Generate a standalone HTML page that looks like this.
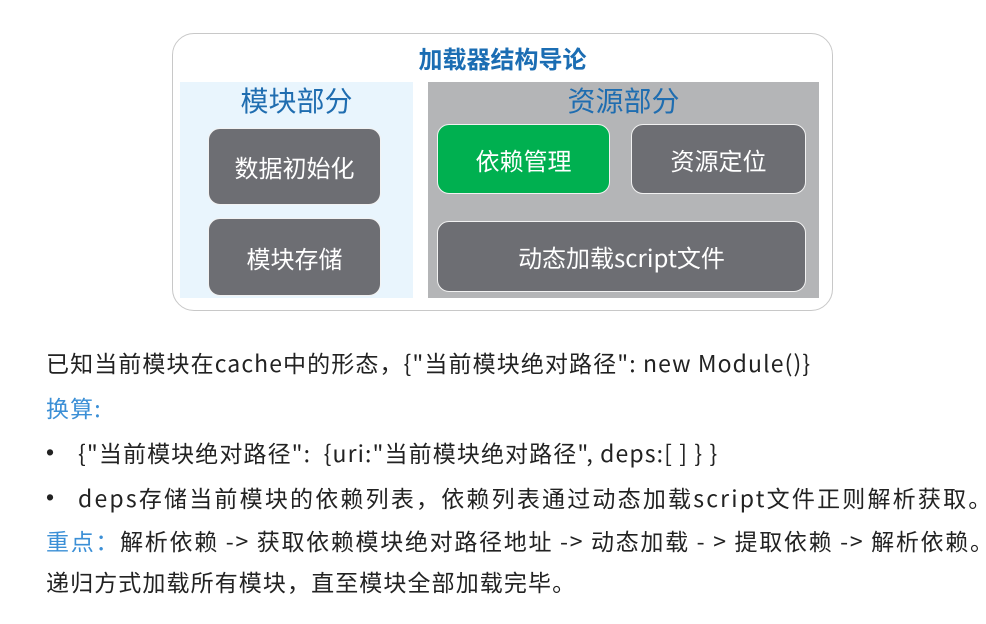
<!DOCTYPE html>
<html><head><meta charset="utf-8"><style>
body{margin:0;width:986px;height:624px;background:#fff;font-family:"Noto Sans CJK SC","Liberation Sans",sans-serif;position:relative;overflow:hidden}
.a{position:absolute}
.outer{left:172px;top:33px;width:659px;height:276px;border:1.5px solid #c8c8c8;border-radius:22px}
.title{left:172px;width:661px;top:42px;line-height:32px;text-align:center;font-size:24px;font-weight:bold;color:#1b6db3}
.lp{left:180px;top:82px;width:233px;height:216px;background:#e9f5fd}
.rp{left:428px;top:82px;width:391px;height:216px;background:#b4b5b7}
.h{font-size:28px;line-height:36px;color:#1f6db0;text-align:center}
.b{background:#6d6e73;border:1.5px solid #f2f2f2;border-radius:12px;color:#fff;font-size:24px;display:flex;align-items:center;justify-content:center;box-sizing:border-box}
.t{left:46px;font-size:23px;line-height:30px;color:#222;white-space:nowrap;letter-spacing:1.1px}
.blue{color:#3b8fd6}
.bul{position:absolute;left:0;font-family:"Liberation Sans",sans-serif}
</style></head><body>
<div class="a outer"></div>
<div class="a title">加载器结构导论</div>
<div class="a lp"></div>
<div class="a rp"></div>
<div class="a h" style="left:180px;width:233px;top:82px">模块部分</div>
<div class="a h" style="left:428px;width:391px;top:82px">资源部分</div>
<div class="a b" style="left:208px;top:128px;width:173px;height:77px">数据初始化</div>
<div class="a b" style="left:208px;top:218px;width:173px;height:78px">模块存储</div>
<div class="a b" style="left:437px;top:124px;width:173px;height:70px;background:#00b050">依赖管理</div>
<div class="a b" style="left:631px;top:124px;width:175px;height:70px">资源定位</div>
<div class="a b" style="left:437px;top:221px;width:369px;height:71px">动态加载script文件</div>
<div class="a t" style="top:347px">已知当前模块在cache中的形态，{"当前模块绝对路径": new Module()}</div>
<div class="a t blue" style="top:392px">换算:</div>
<div class="a t" style="top:437px"><span class="bul">•</span><span style="padding-left:32px">{"当前模块绝对路径":&nbsp; {uri:"当前模块绝对路径", deps:[ ] } }</span></div>
<div class="a t" style="top:482px;letter-spacing:2.2px"><span class="bul">•</span><span style="padding-left:32px">deps存储当前模块的依赖列表，依赖列表通过动态加载script文件正则解析获取。</span></div>
<div class="a t" style="top:525px;letter-spacing:1.7px"><span class="blue">重点：</span>解析依赖 -&gt; 获取依赖模块绝对路径地址 -&gt; 动态加载 - &gt; 提取依赖 -&gt; 解析依赖。</div>
<div class="a t" style="top:566px">递归方式加载所有模块，直至模块全部加载完毕。</div>
</body></html>
